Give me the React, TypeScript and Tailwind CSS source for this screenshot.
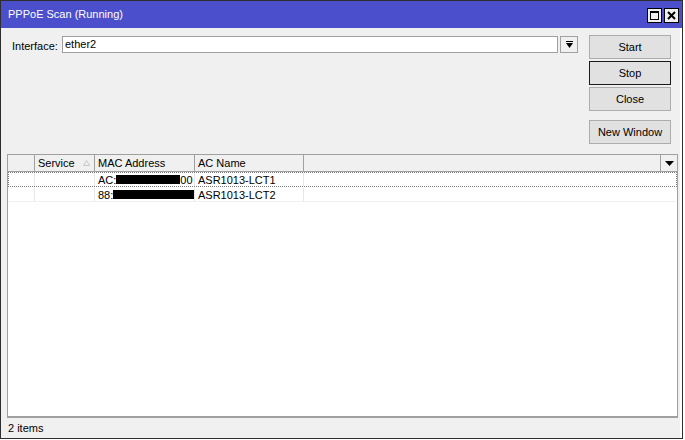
import type { ReactNode } from "react";

const font = { fontFamily: '"Liberation Sans", Arial, sans-serif' };

function WinButton({ children, focused }: { children: ReactNode; focused?: boolean }) {
  return (
    <button
      type="button"
      className={
        focused
          ? "h-[24px] w-[82px] border border-[#1a1a1a] bg-[#e1e1e1] text-[11px] text-black"
          : "h-[24px] w-[82px] border border-[#adadad] bg-[#e1e1e1] text-[11px] text-black"
      }
    >
      {children}
    </button>
  );
}

function Redacted({ w }: { w: string }) {
  return <span className={`inline-block h-[9px] bg-black align-[-1px] ${w}`} />;
}

export default function App() {
  const rows = [
    { mac: <>AC:<Redacted w="w-[64px]" />00</>, name: "ASR1013-LCT1", focus: true },
    { mac: <>88:<Redacted w="w-[82px]" /></>, name: "ASR1013-LCT2", focus: false },
  ];

  return (
    <div className="bg-white w-[685px] h-[440px]" style={font}>
      <div className="flex h-[439px] w-[683px] flex-col border border-[#2e2e2e] bg-[#f0f0f0]">
        {/* title bar */}
        <div className="flex h-[27px] items-center justify-between bg-[#4b4fcb] pl-[7px] pr-[3px]">
          <span className="text-[11px] text-white">PPPoE Scan (Running)</span>
          <div className="mt-[2px] flex gap-[2px]">
            <div className="flex h-[15px] w-[15px] items-center justify-center border border-black bg-[#f0f0f0]">
              <div className="h-[9px] w-[9px] border border-t-2 border-black" />
            </div>
            <div className="flex h-[15px] w-[15px] items-center justify-center border border-black bg-[#f0f0f0]">
              <svg width="9" height="9" viewBox="0 0 9 9">
                <path d="M1 1 L8 8 M8 1 L1 8" stroke="black" strokeWidth="2" />
              </svg>
            </div>
          </div>
        </div>

        <div className="flex flex-1 flex-col border-r-2 border-white">
          {/* interface + buttons */}
          <div className="flex pt-[7px] pl-[11px] pr-[9px]">
            <div className="flex flex-1 items-start pt-[1px]">
              <span className="mt-[2px] w-[50px] text-[11px] text-black">Interface:</span>
              <div className="flex h-[17px] flex-1 items-center border border-[#a0a0a0] bg-white pl-[2px] text-[11px] text-black">
                ether2
              </div>
              <div className="ml-[2px] flex h-[17px] w-[18px] items-center justify-center border border-[#a0a0a0] bg-[#f0f0f0]">
                <svg width="9" height="8" viewBox="0 0 9 8">
                  <rect x="1" y="0" width="7" height="1" fill="black" />
                  <path d="M1 2 H8 L4.5 7 Z" fill="black" />
                </svg>
              </div>
            </div>
            <div className="ml-[11px] flex flex-col gap-[2px]">
              <WinButton>Start</WinButton>
              <WinButton focused>Stop</WinButton>
              <WinButton>Close</WinButton>
              <div className="mt-[6px]">
                <WinButton>New Window</WinButton>
              </div>
            </div>
          </div>

          {/* scan result list */}
          <div className="mt-[10px] ml-[6px] mr-[2px] flex flex-1 flex-col border border-[#a0a0a0] border-b-2 bg-white text-[11px] text-black">
            <div className="flex h-[17px] border-b border-[#a0a0a0] bg-[#f0f0f0]">
              <div className="w-[27px] border-r border-[#a0a0a0]" />
              <div className="flex w-[60px] items-center justify-between border-r border-[#a0a0a0] pl-[3px] pr-[4px]">
                <span>Service</span>
                <svg width="7" height="6" viewBox="0 0 7 6">
                  <path d="M3.5 0.5 L6.5 5.5 H0.5 Z" fill="none" stroke="#c8c8c8" strokeWidth="1" />
                </svg>
              </div>
              <div className="flex w-[100px] items-center border-r border-[#a0a0a0] pl-[3px]">MAC Address</div>
              <div className="flex w-[109px] items-center border-r border-[#a0a0a0] pl-[3px]">AC Name</div>
              <div className="flex-1 border-r border-[#a0a0a0]" />
              <div className="flex w-[16px] items-center justify-center">
                <svg width="9" height="5" viewBox="0 0 9 5">
                  <path d="M0 0 H9 L4.5 5 Z" fill="black" />
                </svg>
              </div>
            </div>
            {rows.map((r, i) => (
              <div
                key={i}
                className={
                  r.focus
                    ? "flex h-[15px] items-center border border-dotted border-[#7a7a7a]"
                    : "flex h-[15px] items-center border border-transparent border-b-[#f0f0f0]"
                }
              >
                <div className="h-full w-[26px] border-r border-[#e6e6e6]" />
                <div className="h-full w-[60px] border-r border-[#e6e6e6]" />
                <div className="flex h-full w-[100px] items-center overflow-visible whitespace-nowrap border-r border-[#e6e6e6] pl-[3px]">
                  {r.mac}
                </div>
                <div className="flex h-full w-[109px] items-center border-r border-[#e6e6e6] pl-[3px]">{r.name}</div>
                <div className="flex-1" />
              </div>
            ))}
          </div>

          {/* status bar */}
          <div className="flex h-[20px] items-center pl-[7px] text-[11px] text-black">2 items</div>
        </div>
      </div>
    </div>
  );
}
